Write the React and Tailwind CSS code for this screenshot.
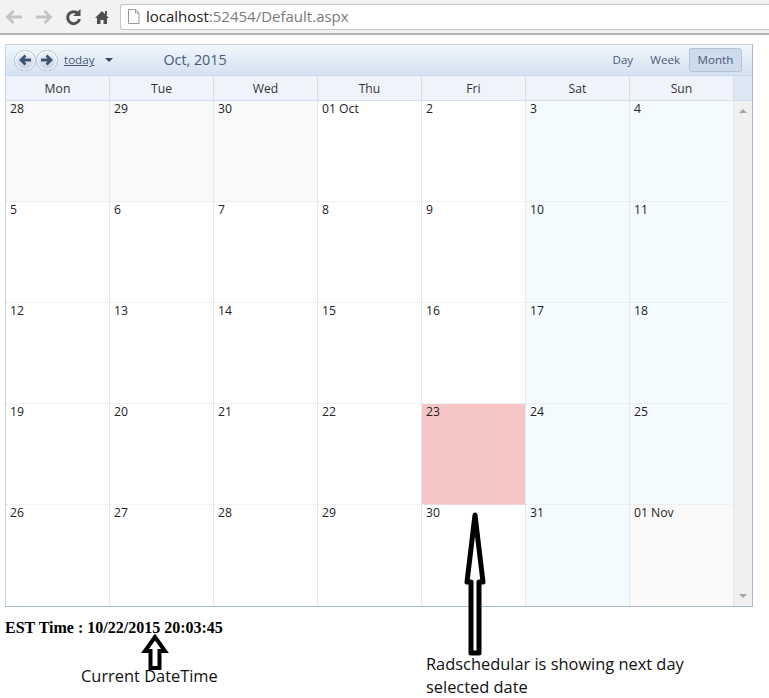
import React from "react";

const days = ["Mon", "Tue", "Wed", "Thu", "Fri", "Sat", "Sun"];
const weeks = [
  ["28", "29", "30", "01 Oct", "2", "3", "4"],
  ["5", "6", "7", "8", "9", "10", "11"],
  ["12", "13", "14", "15", "16", "17", "18"],
  ["19", "20", "21", "22", "23", "24", "25"],
  ["26", "27", "28", "29", "30", "31", "01 Nov"],
];

function cellBg(w, d) {
  if (w === 3 && d === 4) return "bg-[#f6c6c6]";
  if ((w === 0 && d < 3) || (w === 4 && d === 6)) return "bg-[#f9f9f9]";
  if (d >= 5) return "bg-[#f4fbff]";
  return "bg-white";
}

function NavButton({ d }) {
  return (
    <span className="flex h-[21px] w-[22px] items-center justify-center rounded-full border border-[#b5c6d9] bg-gradient-to-b from-[#f2f5f9] to-[#c3d3e5] shadow-[inset_0_0_0_1px_#ffffff]">
      <svg width="14" height="12" viewBox="0 0 14 12">
        <path d={d} fill="none" stroke="#3f5472" strokeWidth="2.800" />
      </svg>
    </span>
  );
}

export default function App() {
  return (
    <div className="relative h-[698px] w-[769px] overflow-hidden bg-white font-['Open_Sans',sans-serif] text-[12.200px] text-[#222]">
      <div className="flex h-[35px] items-center border-b-2 border-[#b4b4b4] bg-[#f2f2f2]">
        <div className="flex w-[120px] shrink-0 items-center">
          <svg width="120" height="28" viewBox="0 0 120 28">
            <path d="M8 14h14M13.500 8 7.500 14l6 6" fill="none" stroke="#c4c4c4" strokeWidth="2.800" />
            <path d="M36 14h14M44.500 8l6 6-6 6" fill="none" stroke="#c4c4c4" strokeWidth="2.800" />
            <path d="M78 10.500a6 6 0 1 0 1.500 5.500" fill="none" stroke="#505050" strokeWidth="3" />
            <path d="M73 13h7.500V6z" fill="#505050" />
            <path d="M95 15 102 8l7 7h-2v6h-3.500v-4h-3v4H97v-6z" fill="#505050" />
            <path d="M105 8h2v4h-2z" fill="#505050" />
          </svg>
        </div>
        <div className="flex h-[26px] w-[650px] items-center rounded-l-[3px] border border-r-0 border-[#c4c4c4] bg-white pl-[6px] text-[15px]">
          <svg width="13" height="15" viewBox="0 0 13 15" className="mr-[6px]">
            <path d="M1.500.500h7l3.500 3.500v10.500h-10.500zM8.500.500V4H12" fill="#fff" stroke="#9a9a9a" />
          </svg>
          <span className="text-[#222]">localhost</span>
          <span className="text-[#7a7a7a]">:52454/Default.aspx</span>
        </div>
      </div>

      <div className="ml-[5px] mt-[9px] w-[748px] border border-[#c5d6e8] border-b-[#a9b8cf] border-r-[#a9b8cf]">
        <div className="flex h-[31px] items-center justify-between border-b border-[#cbdaea] bg-gradient-to-b from-[#f2f7fc] via-[#e2ecf6] to-[#d5e2f1] pl-[8px] pr-[10px] text-[11.600px] text-[#4a5a78]">
          <div className="flex items-center">
            <NavButton d="M13 6H3M7.500 1.500 3 6l4.500 4.500" />
            <NavButton d="M1 6h10M6.500 1.500 11 6l-4.500 4.500" />
            <span className="ml-[6px] underline">today</span>
            <span className="ml-[11px] h-0 w-0 border-x-[4px] border-t-[4px] border-x-transparent border-t-[#34495f]" />
            <span className="ml-[50px] text-[14.300px]">Oct, 2015</span>
          </div>
          <div className="flex items-center">
            <span className="pr-[17px]">Day</span>
            <span className="pr-[9px]">Week</span>
            <span className="flex h-[24px] w-[53px] items-center justify-center rounded-[3px] border border-[#b4c5d8] bg-[#cddbea]">Month</span>
          </div>
        </div>

        <div className="flex h-[25px] border-b border-[#d3dded] bg-[#dde8f4]">
          {days.map((d) => (
            <div key={d} className="flex w-[104px] items-center justify-center border-r border-[#d3dded] bg-[#f0f3fb] pt-[2px] text-[#333]">
              {d}
            </div>
          ))}
        </div>

        <div className="flex">
          <div className="flex flex-col">
            {weeks.map((week, w) => (
              <div key={w} className="flex h-[101px]">
                {week.map((label, d) => (
                  <div
                    key={d}
                    className={`w-[104px] border-r border-[#e4e8ee] pl-[4px] pt-0 leading-[16px] ${w < 4 ? "border-b border-b-[#e6e6e6] [border-bottom-style:dotted]" : ""} ${cellBg(w, d)}`}
                  >
                    {label}
                  </div>
                ))}
              </div>
            ))}
          </div>
          <div className="flex flex-1 flex-col items-center justify-between bg-[#f0f0f0] py-[8px]">
            <span className="h-0 w-0 border-x-[4px] border-b-[4px] border-x-transparent border-b-[#a6a6a6]" />
            <span className="h-0 w-0 border-x-[4px] border-t-[4px] border-x-transparent border-t-[#a6a6a6]" />
          </div>
        </div>
      </div>

      <div className="ml-[5px] mt-[12px] font-['Liberation_Serif',serif] text-[16px] leading-[18px] font-bold text-black">
        EST Time : 10/22/2015 20:03:45
      </div>

      <div className="absolute left-[81px] top-[665px] text-[16.400px] leading-[21px] text-[#111]">Current DateTime</div>
      <div className="absolute left-[426px] top-[652px] w-[290px] text-[16.400px] leading-[23px] text-[#111]">
        Radschedular is showing next day selected date
      </div>

      <svg className="absolute left-[140px] top-[634px]" width="30" height="40" viewBox="0 0 30 40">
        <path d="M15 3 5 17h5.500V34h9V17H25z" fill="#fff" stroke="#000" strokeWidth="4" />
      </svg>
      <svg className="absolute left-[460px] top-[508px]" width="30" height="150" viewBox="0 0 30 150">
        <path d="M15 7 7 74h4v71h8V74h4z" fill="#fff" stroke="#000" strokeWidth="5" strokeLinejoin="round" />
      </svg>
    </div>
  );
}
